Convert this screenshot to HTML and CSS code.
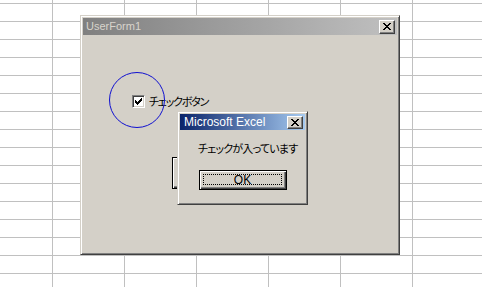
FILE: index.html
```html
<!DOCTYPE html>
<html lang="ja">
<head>
<meta charset="utf-8">
<title>UserForm1</title>
<link rel="stylesheet" href="styles.css">
</head>
<body>
<div class="sheet">
  <div class="win userform">
    <div class="titlebar inactive">
      <span class="title-text">UserForm1</span>
      <span class="close-btn"><svg width="8" height="7" viewBox="0 0 8 7" shape-rendering="crispEdges"><path d="M0 0h2v1H0zM6 0h2v1H6zM1 1h2v1H1zM5 1h2v1H5zM2 2h4v1H2zM3 3h2v1H3zM2 4h4v1H2zM1 5h2v1H1zM5 5h2v1H5zM0 6h2v1H0zM6 6h2v1H6z" fill="#000"/></svg></span>
    </div>
    <div class="form-client">
      <div class="check-row">
        <span class="checkbox"><svg width="7" height="7" viewBox="0 0 7 7" shape-rendering="crispEdges"><path d="M6 0h1v1H6zM5 1h2v1H5zM0 2h1v1H0zM4 2h3v1H4zM0 3h2v1H0zM3 3h3v1H3zM0 4h5v1H0zM1 5h3v1H1zM2 6h1v1H2z" fill="#000"/></svg></span>
        <span class="jp label">チェックボタン</span>
      </div>
      <div class="btn cmd-btn"></div>
    </div>
  </div>
  <div class="circle"></div>
  <div class="win msgbox">
    <div class="titlebar active">
      <span class="title-text msg-title">Microsoft Excel</span>
      <span class="close-btn small"><svg width="8" height="7" viewBox="0 0 8 7" shape-rendering="crispEdges"><path d="M0 0h2v1H0zM6 0h2v1H6zM1 1h2v1H1zM5 1h2v1H5zM2 2h4v1H2zM3 3h2v1H3zM2 4h4v1H2zM1 5h2v1H1zM5 5h2v1H5zM0 6h2v1H0zM6 6h2v1H6z" fill="#000"/></svg></span>
    </div>
    <div class="msg-client">
      <div class="jp msg-text">チェックが入っています</div>
      <div class="btn ok-btn"><span class="focus">OK</span></div>
    </div>
  </div>
</div>
</body>
</html>
```
FILE: styles.css
```css
html, body {
  margin: 0;
  padding: 0;
  background: #fff;
}
.sheet {
  position: relative;
  width: 482px;
  height: 287px;
  overflow: hidden;
  background-color: #fff;
  background-image:
    linear-gradient(to right, #c0c0c0 1px, transparent 1px),
    linear-gradient(to bottom, #c0c0c0 1px, transparent 1px);
  background-size: 72px 100%, 100% 18px;
  background-position: 52px 0, 0 3px;
  font-family: "Liberation Sans", Arial, sans-serif;
}
.win {
  position: absolute;
  box-sizing: border-box;
  background: #d4d0c8;
  border: 1px solid;
  border-color: #d4d0c8 #404040 #404040 #d4d0c8;
  box-shadow: inset 1px 1px #fff, inset -1px -1px #808080;
  padding: 2px;
  display: flex;
  flex-direction: column;
}
.userform {
  left: 80px;
  top: 15px;
  width: 320px;
  height: 240px;
}
.msgbox {
  left: 177px;
  top: 111px;
  width: 131px;
  height: 94px;
}
.titlebar {
  height: 17px;
  display: flex;
  align-items: flex-start;
  justify-content: space-between;
}
.titlebar.inactive {
  background: linear-gradient(to right, #808080, #c0c0c0);
}
.titlebar.active {
  height: 16px;
  background: linear-gradient(to right, #0a246a, #a6caf0);
}
.title-text {
  padding-left: 3px;
  font-size: 11px;
  line-height: 17px;
  color: #d8d4cc;
  white-space: nowrap;
}
.msg-title {
  font-size: 12px;
  line-height: 16px;
  color: #fff;
  padding-left: 4px;
}
.close-btn {
  box-sizing: border-box;
  width: 16px;
  height: 14px;
  margin-top: 2px;
  margin-right: 2px;
  background: #d4d0c8;
  border: 1px solid;
  border-color: #fff #404040 #404040 #fff;
  box-shadow: inset -1px -1px #808080;
  display: flex;
  align-items: center;
  justify-content: center;
  padding: 0 1px 1px 0;
}
.close-btn.small {
  height: 13px;
}
.jp {
  font-family: "Noto Sans CJK JP", "Noto Sans", sans-serif;
  font-feature-settings: "palt";
  font-size: 11px;
  color: #000;
}
.form-client {
  display: flex;
  flex-direction: column;
  align-items: flex-start;
}
.check-row {
  margin-top: 60px;
  margin-left: 49px;
  display: flex;
  align-items: center;
  gap: 4px;
  height: 13px;
}
.checkbox {
  box-sizing: border-box;
  width: 13px;
  height: 13px;
  background: #fff;
  border: 1px solid;
  border-color: #808080 #fff #fff #808080;
  box-shadow: inset 1px 1px #404040, inset -1px -1px #d4d0c8;
  display: flex;
  align-items: center;
  justify-content: center;
}
.label {
  line-height: 13px;
  letter-spacing: -1.2px;
}
.btn {
  box-sizing: border-box;
  background: #d4d0c8;
  border: 1px solid #000;
  box-shadow: inset 1px 1px #fff, inset -1px -1px #404040, inset -2px -2px #808080;
}
.cmd-btn {
  margin-top: 49px;
  margin-left: 89px;
  width: 100px;
  height: 32px;
}
.circle {
  position: absolute;
  left: 109px;
  top: 72px;
  width: 56px;
  height: 56px;
  box-sizing: border-box;
  border: 1px solid #1010d0;
  border-radius: 50%;
}
.msg-client {
  display: flex;
  flex-direction: column;
  align-items: flex-start;
}
.msg-text {
  margin-top: 11px;
  margin-left: 18px;
  line-height: 14px;
  white-space: nowrap;
  letter-spacing: -0.8px;
}
.ok-btn {
  margin-top: 15px;
  margin-left: 19px;
  width: 88px;
  height: 20px;
  padding: 3px 4px 4px 3px;
  display: flex;
}
.focus {
  flex: 1;
  box-sizing: border-box;
  border: 1px dotted #000;
  display: flex;
  align-items: center;
  justify-content: center;
  font-size: 12px;
  color: #000;
  line-height: 1;
}
```
